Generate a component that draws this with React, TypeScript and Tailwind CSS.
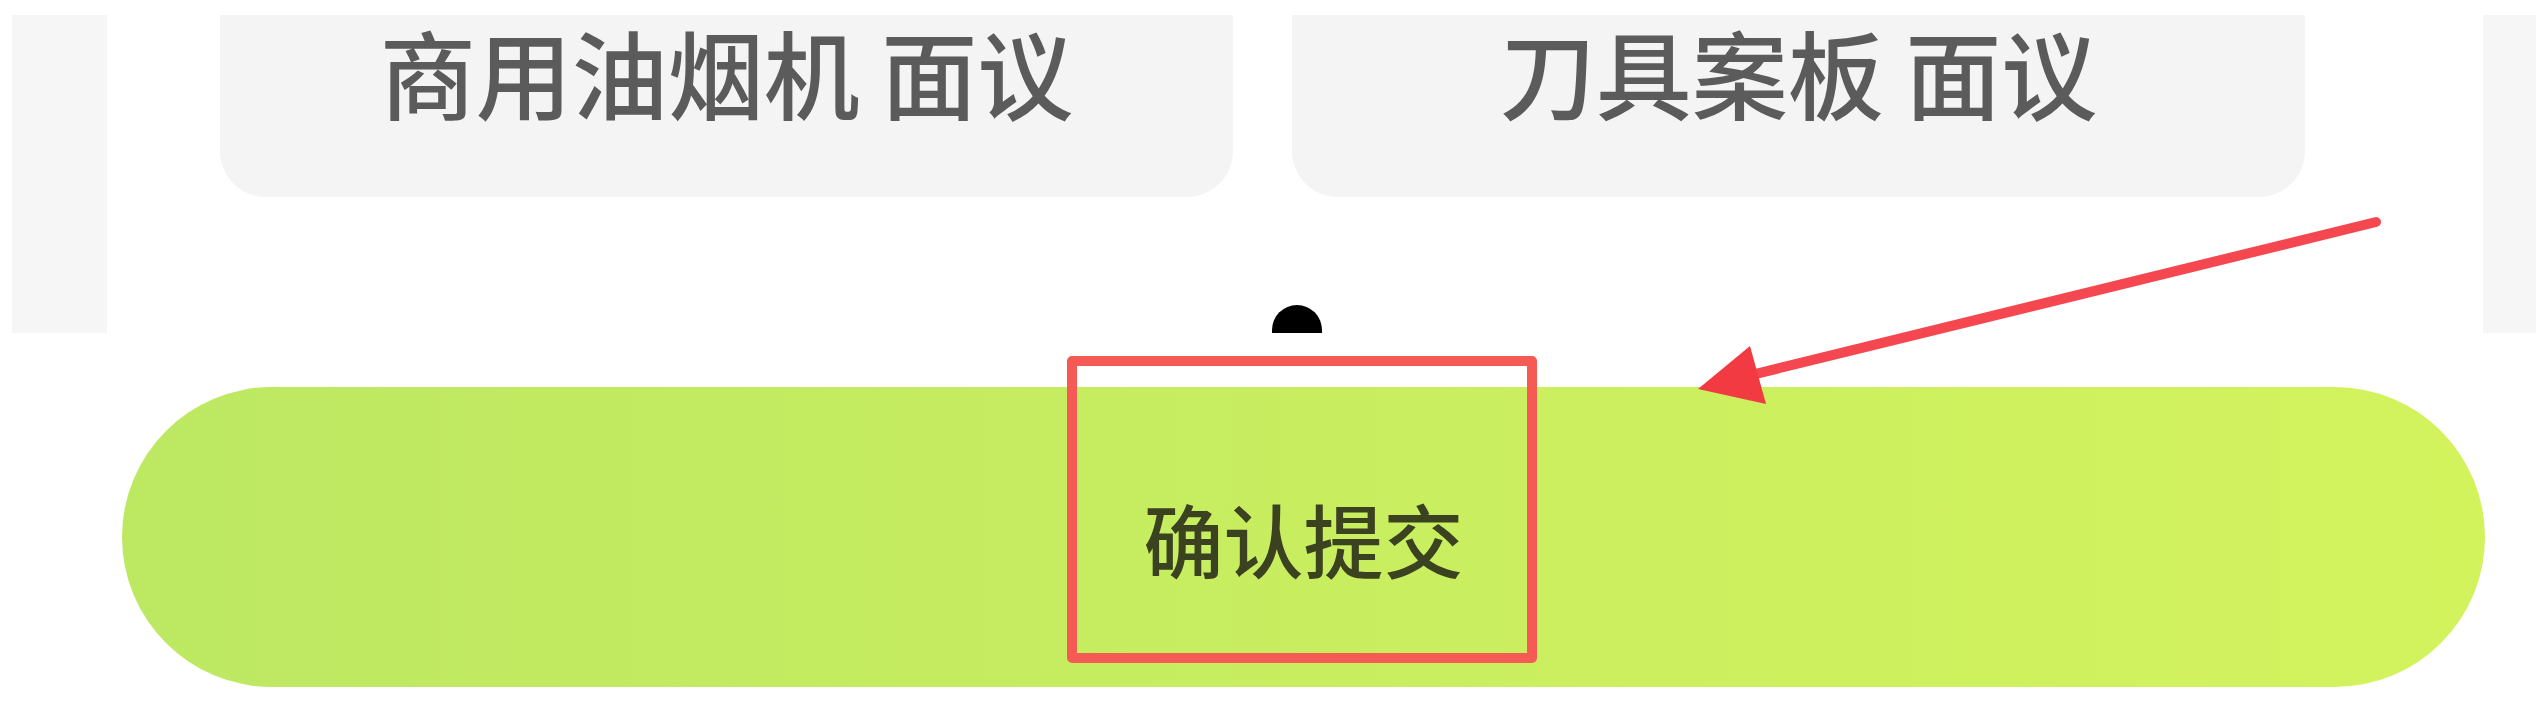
import React from "react";

export default function App() {
  return (
    <div
      className="relative w-[2548px] h-[720px] overflow-hidden bg-white"
      style={{ fontFamily: '"Noto Sans CJK SC", "Noto Sans", sans-serif' }}
    >
      {/* top list area */}
      <div className="pt-[15px] px-[12px]">
        <div className="flex h-[318px] bg-[#f6f6f6]">
          <div className="w-[95px] shrink-0" />
          <div className="flex flex-1 gap-[59px] bg-white pl-[113px] pr-[178px]">
            <div className="flex h-[182px] flex-1 items-start justify-center rounded-b-[46px] bg-[#f4f4f4]">
              <span className="text-[96px] leading-[112px] font-medium text-[#5b5b5b]">商用油烟机 面议</span>
            </div>
            <div className="flex h-[182px] flex-1 items-start justify-center rounded-b-[46px] bg-[#f4f4f4]">
              <span className="text-[96px] leading-[112px] font-medium text-[#5b5b5b]">刀具案板 面议</span>
            </div>
          </div>
          <div className="w-[53px] shrink-0" />
        </div>
      </div>

      {/* bottom button bar */}
      <div className="pt-[54px] pl-[122px] pr-[63px]">
        <button className="flex h-[300px] w-full items-center justify-center rounded-full bg-gradient-to-r from-[#bde862] to-[#d3f35d]">
          <span className="text-[80px] leading-[100px] font-medium text-[#3a4220]">确认提交</span>
        </button>
      </div>

      {/* black half dot */}
      <div className="absolute left-[1272px] top-[305px] h-[28px] w-[50px] rounded-t-full bg-black" />

      {/* red annotation rectangle */}
      <div className="absolute left-[1067px] top-[356px] h-[307px] w-[470px] rounded-[5px] border-[10px] border-[#f55a55]" />

      {/* red annotation arrow */}
      <svg className="absolute left-0 top-0" width="2548" height="720" viewBox="0 0 2548 720">
        <line x1="2376" y1="222" x2="1735" y2="379" stroke="#f5474f" strokeWidth="10" strokeLinecap="round" />
        <polygon points="1698,389 1750,346 1766,404" fill="#f23a42" />
      </svg>
    </div>
  );
}
